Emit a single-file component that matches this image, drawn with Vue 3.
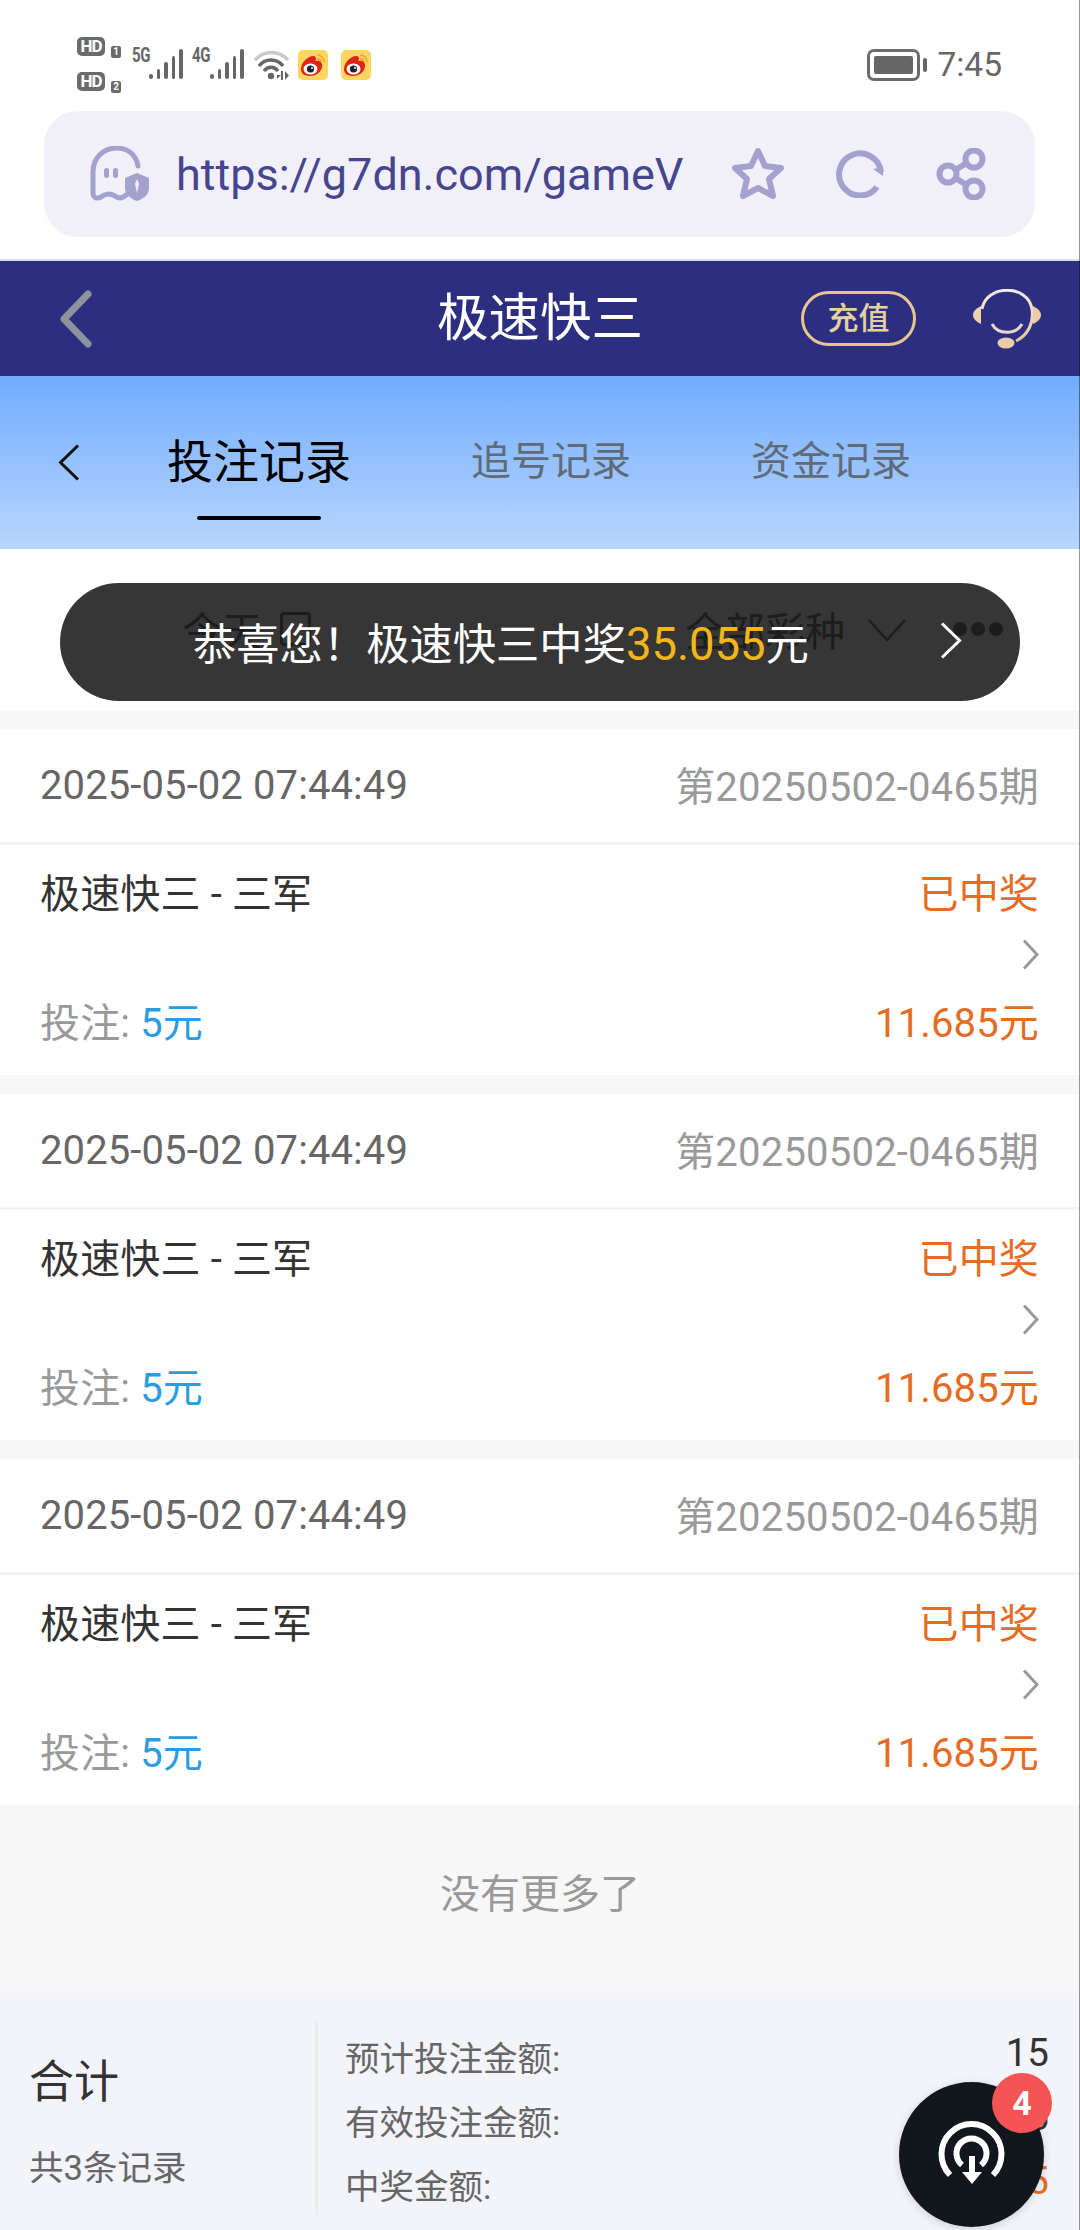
<script setup>
const records = [1, 2, 3].map((id) => ({
  id,
  time: '2025-05-02 07:44:49',
  issue: '第20250502-0465期',
  game: '极速快三 - 三军',
  status: '已中奖',
  stake: '5元',
  prize: '11.685元'
}))
const totals = [
  { label: '预计投注金额:', value: '15', win: false },
  { label: '有效投注金额:', value: '15', win: false },
  { label: '中奖金额:', value: '35.055', win: true }
]
const bars = [5, 10, 17, 23, 30]
</script>

<template>
  <div class="page">
    <div class="status">
      <div class="hd-col">
        <div class="hd-row"><span class="hd">HD</span><span class="sim">1</span></div>
        <div class="hd-row"><span class="hd">HD</span><span class="sim">2</span></div>
      </div>
      <div class="net net-a">
        <span class="net-label">5G</span>
        <span class="bars"><i v-for="b in bars" :key="b" :style="{ height: b + 'px' }"></i></span>
      </div>
      <div class="net net-b">
        <span class="net-label">4G</span>
        <span class="bars"><i v-for="b in bars" :key="b" :style="{ height: b + 'px' }"></i></span>
      </div>
      <svg class="wifi" width="37" height="31" viewBox="0 0 37 31">
        <path d="M2 11C11 1 26 1 35 11" fill="none" stroke="#c9c9c9" stroke-width="3.5" />
        <path d="M6 17C12 9 24 9 30 17" fill="none" stroke="#666" stroke-width="3.5" />
        <path d="M11 22C15 17 21 17 25 22" fill="none" stroke="#666" stroke-width="3.5" />
        <circle cx="18" cy="27" r="3.2" fill="#666" />
        <path d="M28 26L24 26V30ZM30 22V31H28V22ZM32 22V31L36 26.500Z" fill="#666" />
      </svg>
      <svg v-for="n in 2" :key="n" class="weibo" :class="{ second: n === 2 }" width="30" height="30" viewBox="0 0 30 30">
        <rect width="30" height="30" rx="5" fill="#fdd65e" />
        <path d="M3 19C3 12 11 5 16 6C19 7 18 10 17 11C22 10 25 13 24 17C23 23 17 26 12 26C7 26 3 24 3 19Z" fill="#e2231a" />
        <ellipse cx="12.500" cy="19" rx="7" ry="5.500" fill="#fff" />
        <circle cx="12.500" cy="19" r="3.600" fill="#222" />
        <circle cx="14" cy="18" r="1" fill="#fff" />
        <path d="M19 5C23 5 26 8 26 12M19 9C21 9 23 10 23 12" fill="none" stroke="#f4a51c" stroke-width="1.500" />
      </svg>
      <div class="status-right">
        <span class="battery"><i></i></span>
        <span class="nub"></span>
        <span class="clock">7:45</span>
      </div>
    </div>

    <div class="url-bar">
      <svg class="ghost" width="60" height="56" viewBox="0 0 60 56">
        <path d="M48 20C46 8 37 2 27 2C13 2 3 12 3 26V47C3 52 7 53 11 51C16 47 20 47 25 50C29 53 33 52 36 49" fill="none" stroke="#a3a2cf" stroke-width="5" stroke-linecap="round" />
        <rect x="14" y="22" width="5" height="10" rx="2.500" fill="#a3a2cf" />
        <rect x="23" y="22" width="5" height="10" rx="2.500" fill="#a3a2cf" />
        <path d="M47 27L59 32V42C59 49 53 53 47 55C41 53 35 49 35 42V32Z" fill="#a3a2cf" />
        <path d="M47 33L49 38L47 47L45 38Z" fill="#f1f0f8" />
      </svg>
      <span class="url-text">https://g7dn.com/gameV</span>
      <svg class="star" width="56" height="54" viewBox="0 0 56 54">
        <path d="M28 4L35 19L51 21L39 32L43 49L28 41L13 49L17 32L5 21L21 19Z" fill="none" stroke="#a3a2cf" stroke-width="6" stroke-linejoin="round" />
      </svg>
      <svg class="reload" width="48" height="48" viewBox="0 0 48 48">
        <path d="M45 22A21 21 0 1 0 41 37" fill="none" stroke="#a3a2cf" stroke-width="6" />
        <path d="M37 19L47 26L47 17Z" fill="#a3a2cf" />
      </svg>
      <svg class="share" width="50" height="52" viewBox="0 0 50 52">
        <path d="M13 26L37 11M13 26L37 41" stroke="#a3a2cf" stroke-width="6" />
        <circle cx="12" cy="26" r="8.500" fill="#f1f0f8" stroke="#a3a2cf" stroke-width="6" />
        <circle cx="38" cy="11" r="8.500" fill="#f1f0f8" stroke="#a3a2cf" stroke-width="6" />
        <circle cx="38" cy="41" r="8.500" fill="#f1f0f8" stroke="#a3a2cf" stroke-width="6" />
      </svg>
    </div>

    <header class="topbar">
      <svg class="top-back" width="34" height="58" viewBox="0 0 34 58">
        <path d="M29 4L5 29L29 54" fill="none" stroke="#8d929e" stroke-width="7" stroke-linecap="round" stroke-linejoin="round" />
      </svg>
      <h1 class="title">极速快三</h1>
      <span class="recharge">充值</span>
      <svg class="headset" width="68" height="60" viewBox="0 0 68 60">
        <defs>
          <linearGradient id="hs" x1="0" y1="0" x2="0" y2="1">
            <stop offset="0" stop-color="#f2ece6" />
            <stop offset="1" stop-color="#e6c69a" />
          </linearGradient>
        </defs>
        <path d="M9 20C13 -5 55 -5 59 20C61 34 55 46 43 52" fill="none" stroke="url(#hs)" stroke-width="3" />
        <path d="M8 17C2 20 0 23 0 26C0 29 2 32 8 35Z" fill="#ecd3ae" />
        <path d="M60 17C66 20 68 23 68 26C68 29 66 32 60 35Z" fill="#e8cda6" />
        <path d="M19 35C25 46 43 46 49 35" fill="none" stroke="#e6d8d0" stroke-width="3" />
        <ellipse cx="33" cy="54" rx="8.500" ry="5.500" fill="#e8cda6" />
      </svg>
    </header>

    <nav class="tabs">
      <svg class="tab-back" width="22" height="37" viewBox="0 0 22 37">
        <path d="M20 1.500L2.500 18.500L20 35.500" fill="none" stroke="#111" stroke-width="3" />
      </svg>
      <span class="tab tab-on">投注记录</span>
      <span class="tab tab-two">追号记录</span>
      <span class="tab tab-three">资金记录</span>
    </nav>

    <div class="filter">
      <div class="filter-date">
        <span>今天</span>
        <span class="cal"></span>
      </div>
      <div class="filter-game">
        <span>全部彩种</span>
        <svg class="caret" width="40" height="24" viewBox="0 0 40 24">
          <path d="M2 2L20 22L38 2" fill="none" stroke="#8a8a8a" stroke-width="2.500" />
        </svg>
      </div>
      <div class="dots"><i></i><i></i><i></i></div>
    </div>

    <main class="list">
      <article v-for="r in records" :key="r.id" class="card">
        <div class="card-head">
          <span class="time">{{ r.time }}</span>
          <span class="issue">{{ r.issue }}</span>
        </div>
        <div class="card-body">
          <div class="line">
            <span class="game">{{ r.game }}</span>
            <span class="orange">{{ r.status }}</span>
          </div>
          <svg class="more" width="17" height="31" viewBox="0 0 17 31">
            <path d="M2 1.500L15 15.500L2 29.500" fill="none" stroke="#999" stroke-width="3" />
          </svg>
          <div class="line">
            <span class="stake">投注: <em>{{ r.stake }}</em></span>
            <span class="orange">{{ r.prize }}</span>
          </div>
        </div>
      </article>
      <div class="no-more">没有更多了</div>
    </main>

    <footer class="summary">
      <div class="sum-left">
        <div class="sum-title">合计</div>
        <div class="sum-count">共3条记录</div>
      </div>
      <div class="sum-right">
        <div v-for="t in totals" :key="t.label" class="sum-row">
          <span>{{ t.label }}</span>
          <b :class="{ orange: t.win }">{{ t.value }}</b>
        </div>
      </div>
    </footer>

    <div class="toast">
      <span class="toast-text">恭喜您！极速快三中奖<em>35.055</em>元</span>
      <svg class="toast-go" width="22" height="37" viewBox="0 0 22 37">
        <path d="M2 1.500L19.500 18.500L2 35.500" fill="none" stroke="#fff" stroke-width="3" />
      </svg>
    </div>

    <div class="fab">
      <svg width="145" height="145" viewBox="0 0 145 145">
        <path d="M51 93A30 30 0 1 1 94 93" fill="none" stroke="#fff" stroke-width="6" />
        <path d="M63 83A15 15 0 1 1 82 83" fill="none" stroke="#fff" stroke-width="6" />
        <path d="M73 74V92" fill="none" stroke="#fff" stroke-width="6" />
        <path d="M63 90H83L73 102Z" fill="#fff" />
      </svg>
      <span class="badge">4</span>
    </div>
  </div>
</template>

<style>
html, body { margin: 0; background: #fff; }
</style>

<style scoped>
.page {
  position: relative;
  width: 1080px;
  height: 2230px;
  overflow: hidden;
  background: #fff;
  font-family: Roboto, "Noto Sans CJK SC", sans-serif;
  font-size: 40px;
  color: #333;
}
.page::after {
  content: ""; position: absolute; right: 0; top: 0; bottom: 0; width: 1px; background: rgba(0, 0, 0, 0.4);
}
em { font-style: normal; }

.status { height: 111px; display: flex; padding: 37px 78px 0 77px; box-sizing: border-box; color: #666; }
.hd-col { display: flex; flex-direction: column; gap: 16px; width: 44px; }
.hd-row { display: flex; align-items: flex-end; gap: 6px; height: 19px; }
.hd {
  width: 28px; height: 19px; border-radius: 5px; background: #6b6b6b; color: #fff;
  font-size: 17px; font-weight: 700; line-height: 19px; text-align: center; letter-spacing: -1px;
}
.sim {
  width: 10px; height: 12px; border-radius: 2px; background: #6b6b6b; color: #fff;
  font-size: 10px; font-weight: 700; line-height: 12px; text-align: center; margin-bottom: -2px;
}
.net { position: relative; width: 50px; height: 42px; display: block; }
.net-a { margin-left: 11px; }
.net-b { margin-left: 11px; }
.net-label {
  position: absolute; left: 0; top: 10px; font-size: 20px; font-weight: 700; line-height: 16px;
  letter-spacing: -0.5px; color: #666; transform: scaleX(0.75); transform-origin: left center;
}
.net-b .net-label { left: -1px; }
.bars { position: absolute; left: 17px; top: 12px; height: 30px; display: flex; align-items: flex-end; gap: 4px; }
.bars i { display: block; width: 3.500px; background: #666; border-radius: 2px; }
.wifi { margin: 12px 0 0 10px; }
.weibo { margin: 13px 0 0 8px; }
.weibo.second { margin-left: 13px; }
.status-right { margin-left: auto; display: flex; align-items: center; height: 56px; }
.battery {
  width: 53px; height: 32px; box-sizing: border-box; border: 3px solid #6b6b6b; border-radius: 7px; padding: 4px; display: block;
}
.battery i { display: block; width: 100%; height: 100%; background: #666; border-radius: 2px; }
.nub { width: 4px; height: 14px; margin-left: 3px; background: #666; border-radius: 2px; }
.clock { margin-left: 10px; font-size: 33.500px; color: #666; line-height: 58px; }

.url-bar {
  height: 126px; margin: 0 45px 22px 44px; border-radius: 34px; background: #f1f0f8;
  display: flex; align-items: center; padding-left: 46px; box-sizing: border-box;
}
.url-text { margin-left: 26px; font-size: 45px; color: #46458f; width: 518px; white-space: nowrap; overflow: hidden; }
.star { margin-left: 36px; }
.reload { margin-left: 50px; }
.share { margin-left: 52px; }

.topbar {
  position: relative; height: 115px; background: #2c2f7f; border-top: 2px solid #d9dcf0;
  display: flex; align-items: center; padding-left: 59px;
}
.title { position: absolute; left: 0; right: 0; margin: 0; text-align: center; font-size: 51.500px; font-weight: 400; color: #fff; line-height: 115px; }
.recharge {
  margin-left: 708px; width: 115px; height: 55px; box-sizing: border-box; border: 3px solid #e9c48e; border-radius: 28px;
  font-size: 31px; font-weight: 500; line-height: 49px; text-align: center; color: #e5cfa5; position: relative;
}
.headset { margin-left: 57px; }

.tabs {
  position: relative; height: 173px; background: linear-gradient(180deg, #72acff 0%, #b8d6ff 100%);
  display: flex; align-items: center; padding: 0 0 10px 58px; box-sizing: border-box;
}
.tab-back { margin-top: 10px; }
.tab { font-size: 40px; color: #5f6b76; white-space: nowrap; }
.tab-on { margin-left: 87px; font-size: 46px; color: #000; position: relative; }
.tab-on::after {
  content: ""; position: absolute; left: 30px; top: 91px; width: 124px; height: 4px; border-radius: 2px; background: #000;
}
.tab-two { margin-left: 120px; }
.tab-three { margin-left: 120px; }

.filter { height: 161px; display: flex; align-items: center; color: #8a8a8a; padding-bottom: 2px; box-sizing: border-box; position: relative; }
.filter-date { display: flex; align-items: center; margin-left: 182px; gap: 18px; }
.cal { width: 31px; height: 34px; box-sizing: border-box; border: 3px solid #8a8a8a; border-radius: 4px; }
.filter-game { margin-left: 374px; display: flex; align-items: center; gap: 22px; }
.caret { margin-top: 2px; }
.dots { margin-left: 46px; display: flex; gap: 4px; }
.dots i { display: block; width: 14px; height: 14px; border-radius: 50%; background: #8a8a8a; }

.list { background: #f7f7f7; padding-top: 19px; height: 1283px; box-sizing: border-box; }
.card { height: 346px; margin-bottom: 19px; background: #fff; }
.card:nth-of-type(3) { margin-bottom: 0; }
.card-head {
  height: 116px; box-sizing: border-box; border-bottom: 3px solid #f2f2f2; padding: 0 41px 0 40px;
  display: flex; align-items: center; justify-content: space-between;
}
.time { color: #666; letter-spacing: 0.1px; }
.issue { color: #999; letter-spacing: 0.2px; margin-bottom: 3px; }
.card-body { position: relative; padding: 26px 41px 0 40px; }
.line { display: flex; justify-content: space-between; line-height: 48px; letter-spacing: 0.15px; }
.game { color: #333; }
.orange { color: #e46c24; }
.more { display: block; margin: 20px 0 30px auto; }
.stake { color: #999; }
.stake em { color: #2c9ce0; }
.no-more { height: 188px; display: flex; align-items: center; justify-content: center; padding-bottom: 16px; box-sizing: border-box; color: #999; }

.summary { height: 237px; background: #f3f4fa; display: flex; box-sizing: border-box; padding-top: 29px; }
.sum-left { width: 286px; height: 193px; margin-left: 29px; border-right: 3px solid #eaecef; box-sizing: content-box; }
.sum-title { font-size: 45px; line-height: 60px; margin-top: 31px; color: #333; }
.sum-count { font-size: 34.500px; line-height: 44px; margin-top: 33px; color: #666; }
.sum-right { width: 704px; margin-left: 27px; padding-top: 2px; }
.sum-row { display: flex; justify-content: space-between; align-items: center; height: 64px; font-size: 34.500px; color: #666; }
.sum-row b { font-weight: 400; font-size: 38.500px; color: #333; margin-top: -8px; }
.sum-row b.orange { color: #e46c24; }

.toast {
  position: absolute; left: 60px; top: 583px; width: 960px; height: 118px; border-radius: 59px; background: rgba(0, 0, 0, 0.79);
  display: flex; align-items: center; padding-left: 133px; box-sizing: border-box; color: #fff;
}
.toast-text { font-size: 43.300px; margin-bottom: 2px; white-space: nowrap; }
.toast-text em { color: #f4b51b; font-size: 45.400px; }
.toast-go { position: absolute; left: 880px; top: 39px; }

.fab {
  position: absolute; left: 899px; top: 2082px; width: 145px; height: 145px; border-radius: 50%; background: #12161d;
  box-shadow: 0 2px 10px rgba(0, 0, 0, 0.15);
}
.fab svg { display: block; }
.badge {
  position: absolute; left: 93px; top: -9px; width: 60px; height: 60px; border-radius: 50%; background: #f55454;
  color: #fff; font-size: 34px; font-weight: 700; line-height: 60px; text-align: center;
}
</style>
